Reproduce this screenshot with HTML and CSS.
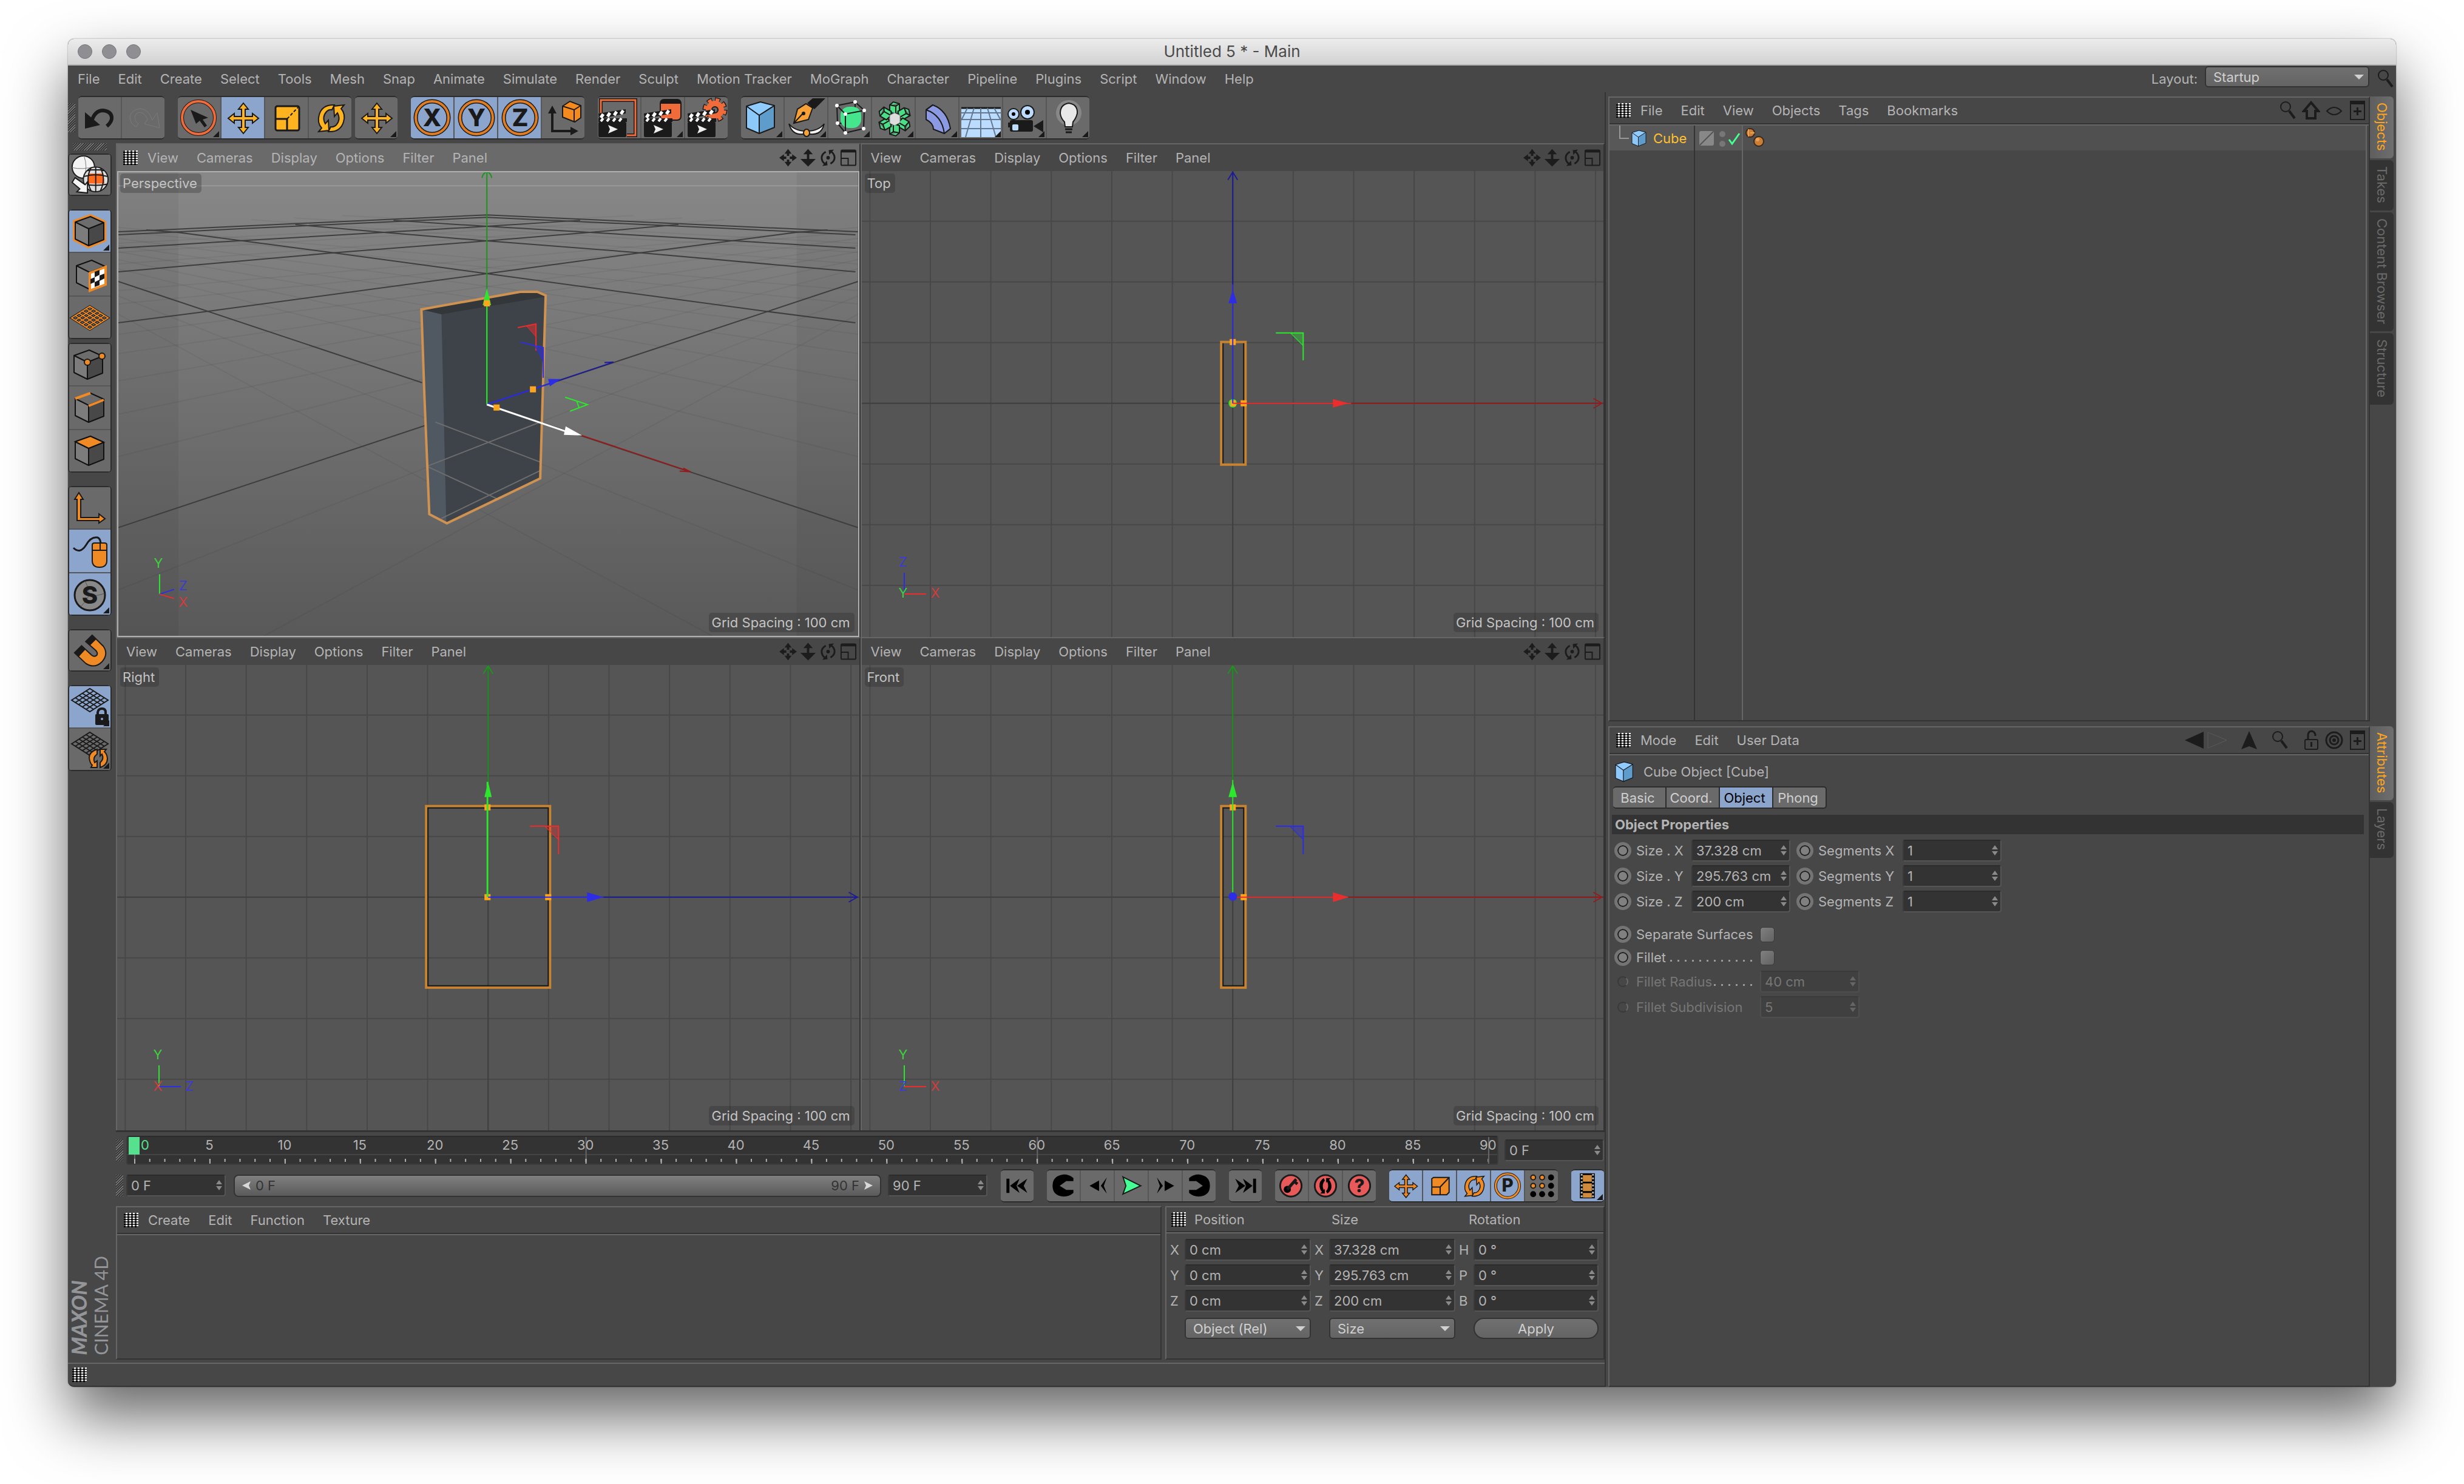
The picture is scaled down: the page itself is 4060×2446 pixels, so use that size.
FILE: index.html
```html
<!DOCTYPE html>
<html lang="en">
<head>
    <meta charset="UTF-8">
    <meta name="viewport" content="width=device-width, initial-scale=1.0">
    <title>Untitled 5 * - Main</title>
    <link rel="stylesheet" href="styles.css">
</head>
<body>

    <!-- Shared icons -->
    <svg class="sprite" aria-hidden="true">
        <symbol id="move" viewBox="0 0 70 68">
            <path d="M36 10l8 10h-5v12h12v-5l10 8-10 8v-5h-12v12h5l-8 10-8-10h5v-12h-12v5l-10-8 10-8v5h12v-12h-5z" fill="currentColor" stroke="#1a1a1a" stroke-width="2"/>
        </symbol>
        <symbol id="scale" viewBox="0 0 70 68">
            <rect x="17" y="15" width="39" height="40" rx="3" fill="currentColor" stroke="#1a1a1a" stroke-width="3"/>
            <path d="M17 36h19v19" fill="none" stroke="#1a1a1a" stroke-width="3"/>
            <path d="M36 36L54 17" stroke="#1a1a1a" stroke-width="2" stroke-dasharray="5 3"/>
        </symbol>
        <symbol id="rotate" viewBox="0 0 70 68">
            <g fill="currentColor" stroke="#1a1a1a" stroke-width="2">
                <path id="rot-half" d="M42 13Q22 12 17 29Q13 42 21 51L16 57L33 55L32 38L27 44Q21 33 29 24Q33 20 38 21Z"/>
                <use href="#rot-half" transform="rotate(180 37 35)"/>
            </g>
        </symbol>
        <symbol id="cube-blue" viewBox="0 0 70 68">
            <path d="M9 15L32 8L55 14L30 30Z" fill="#90ccff"/>
            <path d="M9 15L30 30V60L9 51Z" fill="#8cc8fa"/>
            <path d="M30 30L55 14V50L30 60Z" fill="#5e9ccc"/>
            <path d="M9 15L32 8L55 14V50L30 60L9 51ZM9 15L30 30L55 14M30 30V60" fill="none" stroke="#1a1a1a" stroke-width="2" stroke-linejoin="round"/>
        </symbol>
        <symbol id="cube-grey" viewBox="0 0 68 68">
            <path d="M10 19L35 10L57 20L32 30Z" fill="#6c6c6c"/>
            <path d="M10 19L32 30V58L10 47Z" fill="#7c7c7c"/>
            <path d="M32 30L57 20V48L32 58Z" fill="#484848"/>
            <path d="M10 19L35 10L57 20V48L32 58L10 47ZM10 19L32 30L57 20M32 30V58" fill="none" stroke="#111" stroke-width="2" stroke-linejoin="round"/>
        </symbol>
        <symbol id="clapper" viewBox="0 0 70 68">
            <path d="M1 27L46 20V27L2 36Z" fill="#1a1a1a"/>
            <path d="M5 34l4-6M16 32l4-6M27 30l4-6M38 28l4-6" stroke="#fff" stroke-width="5"/>
            <path d="M1 35h47v6h-47z" fill="#1a1a1a"/>
            <path d="M5 40l4-5M15 40l4-5M25 40l4-5M35 40l4-5" stroke="#fff" stroke-width="4"/>
            <rect x="1" y="41" width="46" height="25" rx="2" fill="#1a1a1a"/>
            <path d="M17 46L33 53L17 60L20 53Z" fill="#eee"/>
        </symbol>
        <symbol id="grid-plane" viewBox="0 0 68 68">
            <path d="M4 35L34 16L64 35L34 54ZM10 31L40 50M16 27L46 46M22 24L52 42M28 20L58 39M10 39L40 20M16 42L46 24M22 46L52 27M28 50L58 31" fill="none"/>
        </symbol>
        <symbol id="nav-pan" viewBox="0 0 30 30">
            <path d="M15 0l6 8h-4v4h-4v-4h-4zM15 30l6-8h-4v-4h-4v4h-4zM0 15l8-6v4h4v4h-4v4zM30 15l-8-6v4h-4v4h4v4z" fill="#1c1c1c"/>
        </symbol>
        <symbol id="nav-zoom" viewBox="0 0 30 30">
            <path d="M15 0l8 9h-6v8h11l-13 13-13-13h11v-8h-6z" fill="#1c1c1c"/>
        </symbol>
        <symbol id="nav-orbit" viewBox="0 0 30 30">
            <g fill="none" stroke="#1c1c1c" stroke-width="3">
                <path d="M11 5Q4 9 4 15Q4 21 9 25"/>
                <path d="M19 25Q26 21 26 15Q26 9 21 5"/>
            </g>
            <path d="M5 29l9-1-1-8zM25 1l-9 1 1 8z" fill="#1c1c1c"/>
            <circle cx="15" cy="15" r="3" fill="#1c1c1c"/>
        </symbol>
        <symbol id="nav-max" viewBox="0 0 30 30">
            <rect x="3" y="2" width="25" height="26" rx="2" fill="none" stroke="#1c1c1c" stroke-width="2"/>
            <path d="M3 2h25v4h-25z" fill="#1c1c1c"/>
            <path d="M3 16h12v12" fill="none" stroke="#1c1c1c" stroke-width="2"/>
        </symbol>
        <symbol id="search" viewBox="0 0 30 34">
            <circle cx="11" cy="11" r="8" fill="none" stroke="#1c1c1c" stroke-width="2"/>
            <path d="M17 18L26 30" stroke="#1c1c1c" stroke-width="4"/>
        </symbol>
        <symbol id="plus-box" viewBox="0 0 30 34">
            <path d="M4 2h23v30h-23z" fill="none" stroke="#1c1c1c" stroke-width="2"/>
            <path d="M4 2h23v5h-23zM14 12h3v5h5v3h-5v5h-3v-5h-5v-3h5z" fill="#1c1c1c"/>
        </symbol>
    </svg>

    <main class="window">
        <header class="titlebar">
            <div class="lights"><i></i><i></i><i></i></div>
            <h1>Untitled 5 * - Main</h1>
        </header>

        <div class="menubar">
            <nav class="menu">
                <button>File</button><button>Edit</button><button>Create</button><button>Select</button><button>Tools</button><button>Mesh</button><button>Snap</button><button>Animate</button><button>Simulate</button><button>Render</button><button>Sculpt</button><button>Motion Tracker</button><button>MoGraph</button><button>Character</button><button>Pipeline</button><button>Plugins</button><button>Script</button><button>Window</button><button>Help</button>
            </nav>
            <label class="layout-label" for="layout">Layout:</label>
            <span class="select layout-select"><select id="layout"><option>Startup</option></select></span>
            <svg class="small-icon"><use href="#search"/></svg>
        </div>

        <div class="body">
            <div class="left">

                <!-- Tool bar -->
                <div class="toolbar">
                    <span class="grip-v"></span>
                    <div class="group">
                        <button aria-label="Undo"><svg viewBox="0 0 70 68"><path d="M22 40Q27 22 41 22Q56 24 55 36Q54 42 47 48" fill="none" stroke="#1a1a1a" stroke-width="6"/><path d="M11 25L11 52L36 46Z" fill="#1a1a1a"/></svg></button>
                        <button aria-label="Redo"><svg viewBox="0 0 70 68"><path d="M50 38Q44 20 30 19Q14 21 13 34Q14 44 23 49L27 44Q19 38 22 30Q26 23 33 26Q39 29 42 37L37 44L62 51L58 26Z" fill="none" stroke="#7a7a7a" stroke-width="1"/></svg></button>
                    </div>
                    <div class="group">
                        <button aria-label="Live selection" class="more"><svg viewBox="0 0 70 68"><circle cx="34" cy="34" r="27" fill="none" stroke="#1a1a1a" stroke-width="6"/><circle cx="34" cy="34" r="27" fill="none" stroke="#ef6b3a" stroke-width="4"/><path d="M21 21L50 34L41 37L48 47L44 50L36 39L30 44Z" fill="#1a1a1a"/></svg></button>
                        <button aria-label="Move" class="on yellow"><svg><use href="#move"/></svg></button>
                        <button aria-label="Scale" class="yellow"><svg><use href="#scale"/></svg></button>
                        <button aria-label="Rotate" class="yellow"><svg><use href="#rotate"/></svg></button>
                    </div>
                    <div class="group near">
                        <button aria-label="Recent tool" class="yellow more"><svg><use href="#move"/></svg></button>
                    </div>
                    <div class="group">
                        <button aria-label="X axis" class="on"><svg viewBox="0 0 70 68"><circle cx="35" cy="34" r="27" class="ring-edge"/><circle cx="35" cy="34" r="27" class="ring"/><text x="35" y="48" class="axis-letter">X</text></svg></button>
                        <button aria-label="Y axis" class="on"><svg viewBox="0 0 70 68"><circle cx="36" cy="34" r="27" class="ring-edge"/><circle cx="36" cy="34" r="27" class="ring"/><text x="36" y="48" class="axis-letter">Y</text></svg></button>
                        <button aria-label="Z axis" class="on"><svg viewBox="0 0 70 68"><circle cx="36" cy="34" r="27" class="ring-edge"/><circle cx="36" cy="34" r="27" class="ring"/><text x="36" y="48" class="axis-letter">Z</text></svg></button>
                        <button aria-label="Coordinate system"><svg viewBox="0 0 70 68"><path d="M17 20V56H50" fill="none" stroke="#1a1a1a" stroke-width="4"/><path d="M17 14L24 27H10ZM60 56L47 49V63Z" fill="#1a1a1a"/><path d="M34 15L46 7L64 14V34L54 41L34 33Z" fill="#f58a1f" stroke="#1a1a1a" stroke-width="2"/><path d="M34 15L53 21L64 14M53 21V41" fill="none" stroke="#1a1a1a" stroke-width="2"/></svg></button>
                    </div>
                    <div class="group">
                        <button aria-label="Render view"><svg viewBox="0 0 70 68"><path d="M5 26V5H62V63H48" fill="none" stroke="#1a1a1a" stroke-width="6"/><path d="M5 26V5H62V63H48" fill="none" stroke="#ef6b3a" stroke-width="3"/><use href="#clapper"/></svg></button>
                        <button aria-label="Render to picture viewer" class="more"><svg viewBox="0 0 70 68"><rect x="31" y="4" width="34" height="34" rx="6" fill="#ef6b3a" stroke="#1a1a1a" stroke-width="2"/><path d="M31 11V10Q31 4 37 4H59Q65 4 65 10V11Z" fill="#1a1a1a"/><use href="#clapper" x="3"/></svg></button>
                        <button aria-label="Render settings"><svg viewBox="0 0 70 68"><circle cx="49" cy="21" r="16" fill="none" stroke="#1a1a1a" stroke-width="9" stroke-dasharray="8 4.5"/><circle cx="49" cy="21" r="16" fill="none" stroke="#ef6b3a" stroke-width="6" stroke-dasharray="6 6.5" stroke-dashoffset="-1"/><circle cx="49" cy="21" r="10" fill="none" stroke="#ef6b3a" stroke-width="10"/><circle cx="49" cy="21" r="5" fill="none" stroke="#1a1a1a" stroke-width="2"/><use href="#clapper" x="3"/></svg></button>
                    </div>
                    <div class="group">
                        <button aria-label="Cube" class="more"><svg><use href="#cube-blue"/></svg></button>
                        <button aria-label="Pen" class="more"><svg viewBox="0 0 70 68"><path d="M15 43L21 20L35 11L46 18L39 37Z" fill="#f7a136" stroke="#1a1a1a" stroke-width="2"/><path d="M15 43L30 27" stroke="#1a1a1a" stroke-width="2"/><circle cx="31" cy="27" r="3" fill="#1a1a1a"/><path d="M37 10L46 2H67L49 20Z" fill="#1a1a1a"/><path d="M7 44Q13 66 36 60Q60 66 65 44Q56 56 36 56Q16 56 7 44Z" fill="#f4f4f4" stroke="#1a1a1a" stroke-width="2"/><ellipse cx="36" cy="59" rx="5" ry="6" fill="#f7a136" stroke="#1a1a1a" stroke-width="2"/></svg></button>
                        <button aria-label="Subdivision surface" class="more"><svg viewBox="0 0 70 68"><path d="M14 14L44 8V44L15 43Z" fill="none" stroke="#1a1a1a" stroke-width="2"/><rect x="20" y="16" width="34" height="35" rx="14" fill="#44e58c"/><path d="M28 28L59 22L58 52L28 59ZM14 14L28 28M44 8L59 22M15 43L28 59" fill="none" stroke="#1a1a1a" stroke-width="2"/><g fill="#fff"><circle cx="14" cy="14" r="3"/><circle cx="44" cy="8" r="3"/><circle cx="59" cy="22" r="3"/><circle cx="28" cy="28" r="3"/><circle cx="15" cy="43" r="3"/><circle cx="58" cy="52" r="3"/><circle cx="28" cy="59" r="3"/></g></svg></button>
                        <button aria-label="Array" class="more"><svg viewBox="0 0 70 68"><g fill="#4ade86" stroke="#1a1a1a" stroke-width="2"><path id="petal" d="M29 13L35 8L45 11V25L39 28L29 25ZM29 13L39 15L45 11M39 15V28"/><use href="#petal" transform="rotate(60 37 36)"/><use href="#petal" transform="rotate(120 37 36)"/><use href="#petal" transform="rotate(180 37 36)"/><use href="#petal" transform="rotate(240 37 36)"/><use href="#petal" transform="rotate(300 37 36)"/></g><path d="M29 30L37 26L46 30V42L37 47L29 43Z" fill="#ddd" stroke="#777" stroke-width="1"/></svg></button>
                        <button aria-label="Bend" class="more"><svg viewBox="0 0 70 68"><path d="M28 13Q52 22 57 52L47 60L29 53Q29 43 17 37V21Z" fill="#8b9ae2" stroke="#1a1a1a" stroke-width="2"/><path d="M17 21Q43 30 47 60M17 21L28 13" fill="none" stroke="#1a1a1a" stroke-width="2"/></svg></button>
                        <button aria-label="Floor" class="more"><svg viewBox="0 0 70 68"><rect x="3" y="18" width="65" height="48" fill="#bcdcff"/><path d="M3 18H68" stroke="#1a1a1a" stroke-width="3"/><path d="M3 26H68M3 37H68M3 52H68M35 18V66M24 18L10 66M46 18L60 66M13 18L3 38M57 18L68 38" stroke="#61788f" stroke-width="2"/></svg></button>
                        <button aria-label="Camera" class="more"><svg viewBox="0 0 70 68"><circle cx="17" cy="28" r="9" fill="#bcdcff" stroke="#1a1a1a" stroke-width="2"/><circle cx="40" cy="25" r="11" fill="#bcdcff" stroke="#1a1a1a" stroke-width="2"/><circle cx="17" cy="28" r="3"/><circle cx="40" cy="25" r="4"/><rect x="11" y="38" width="38" height="19" rx="3" fill="#1a1a1a"/><path d="M50 48L66 38V58ZM8 42h4v8h-4z" fill="#1a1a1a"/><rect x="15" y="45" width="10" height="10" rx="2" fill="#bcdcff"/></svg></button>
                        <button aria-label="Light" class="more"><svg viewBox="0 0 70 68"><circle cx="36" cy="26" r="21" fill="#fff" opacity=".2"/><path d="M36 10Q51 12 50 27Q48 35 43 41L42 49H30L29 41Q23 35 22 27Q22 12 36 10Z" fill="#e8e8e8" stroke="#1a1a1a" stroke-width="2"/><path d="M30 53H42M31 58H41" stroke="#1a1a1a" stroke-width="3"/></svg></button>
                    </div>
                </div>

                <div class="work">
                    <!-- Mode palette -->
                    <aside class="palette">
                        <span class="grip-h"></span>
                        <div class="group vertical near">
                            <button aria-label="Make editable"><svg viewBox="0 0 68 68"><circle cx="23" cy="21" r="19" fill="#f4f4f4" stroke="#1a1a1a" stroke-width="2"/><path d="M24 2Q31 20 24 40M4 22Q22 26 42 20" fill="none" stroke="#777" stroke-width="1"/><circle cx="44" cy="42" r="21" fill="#ddd" stroke="#1a1a1a" stroke-width="2"/><path d="M32 32H57L59 49H30Z" fill="#ff6a1c"/><path d="M44 21V63M36 22Q26 42 36 61M52 22Q62 42 52 61M24 37Q44 31 64 37M24 50Q44 54 64 50M30 27Q44 24 58 27" fill="none" stroke="#1a1a1a" stroke-width="2"/><path d="M9 39L26 51L30 46V65L12 63L17 58L4 47Z" fill="#f4f4f4" stroke="#1a1a1a" stroke-width="2"/></svg></button>
                        </div>
                        <div class="group vertical">
                            <button aria-label="Model" class="on more"><svg viewBox="0 0 68 68"><path d="M10 19L35 10L57 20V48L32 58L10 47Z" fill="none" stroke="#f08a24" stroke-width="8"/><use href="#cube-grey"/></svg></button>
                            <button aria-label="Texture"><svg viewBox="0 0 68 68"><use href="#cube-grey" x="2" y="1"/><path d="M34 32L60 22V51L34 61Z" fill="#fff" stroke="#f08a24" stroke-width="4"/><path d="M35 42l7-3v8l-7 3zM42 30l8-3v8l-8 4zM50 36l8-3v8l-8 4zM42 47l8-4v9l-8 3z" fill="#1a1a1a"/></svg></button>
                            <button aria-label="Workplane"><svg viewBox="0 0 68 68"><use href="#grid-plane" stroke="#1a1a1a" stroke-width="4"/><use href="#grid-plane" stroke="#f08a24" stroke-width="2"/></svg></button>
                        </div>
                        <div class="group vertical near">
                            <button aria-label="Points"><svg viewBox="0 0 68 68"><use href="#cube-grey" x="-2"/><g fill="#f08a24" stroke="#1a1a1a" stroke-width="2"><circle cx="30" cy="30" r="5"/><circle cx="54" cy="20" r="5"/></g></svg></button>
                            <button aria-label="Edges"><svg viewBox="0 0 68 68"><use href="#cube-grey"/><path d="M10 19L35 10M32 31L57 21" stroke="#f08a24" stroke-width="4"/></svg></button>
                            <button aria-label="Polygons"><svg viewBox="0 0 68 68"><use href="#cube-grey"/><path d="M10 19L35 10L57 20L32 30Z" fill="#f08a24" stroke="#111" stroke-width="2"/></svg></button>
                        </div>
                        <div class="group vertical">
                            <button aria-label="Enable axis"><svg viewBox="0 0 68 68"><path d="M16 9L23 20H19V50H49V44L59 52L49 59V55H13V20H9Z" fill="#f08a24" stroke="#1a1a1a" stroke-width="2"/></svg></button>
                            <button aria-label="Tweak" class="on"><svg viewBox="0 0 68 68"><path d="M7 29Q18 40 28 24Q36 10 47 12Q52 14 52 24" fill="none" stroke="#1a1a1a" stroke-width="3"/><path d="M38 24Q38 21 42 21H58Q62 21 62 24V50Q62 61 50 61Q38 61 38 50Z" fill="#f08a24" stroke="#1a1a1a" stroke-width="2"/><path d="M38 33H62M51 21V33" stroke="#1a1a1a" stroke-width="2"/></svg></button>
                            <button aria-label="Viewport solo" class="on more"><svg viewBox="0 0 68 68"><circle cx="34" cy="36" r="25" fill="#888" stroke="#1a1a1a" stroke-width="3"/><path d="M33 36Q32 22 26 13M33 36Q46 38 58 33M33 36Q28 46 19 55" fill="none" stroke="#555" stroke-width="1"/><text x="34" y="50" class="axis-letter">S</text></svg></button>
                        </div>
                        <div class="group vertical">
                            <button aria-label="Snap" class="more"><svg viewBox="0 0 68 68"><path d="M8 38L20 26L37 42Q42 46 46 42Q48 38 44 34L27 19L38 8L57 27Q66 40 55 53Q42 66 27 56Z" fill="#f08a24" stroke="#1a1a1a" stroke-width="2"/><path d="M8 38L20 26L27 32L15 45ZM27 19L38 8L45 15L34 26Z" fill="#1a1a1a"/></svg></button>
                        </div>
                        <div class="group vertical">
                            <button aria-label="Lock workplane" class="on more"><svg viewBox="0 0 68 68"><use href="#grid-plane" y="-12" stroke="#1a1a1a" stroke-width="2"/><path d="M47 48V43Q48 37 54 37Q60 37 60 43V48" fill="none" stroke="#1a1a1a" stroke-width="4"/><rect x="43" y="46" width="22" height="18" rx="2" fill="#1a1a1a"/><circle cx="54" cy="54" r="2" fill="#8ba5cd"/></svg></button>
                            <button aria-label="Planar workplane" class="more"><svg viewBox="0 0 68 68"><use href="#grid-plane" y="-10" stroke="#1a1a1a" stroke-width="2"/><g fill="#f08a24" stroke="#1a1a1a" stroke-width="2"><path d="M46 34Q33 38 33 48Q34 57 38 60L36 64H46V53L42 56Q38 48 46 42Z"/><path d="M51 64Q63 60 63 49Q62 41 58 38L61 34H51V45L54 42Q58 50 51 56Z"/></g></svg></button>
                        </div>
                        <div class="brand">
                            <strong>MAXON</strong>
                            <span>CINEMA 4D</span>
                        </div>
                    </aside>

                    <div class="content">
                        <section class="views">
                            <article class="view active">
                                <header>
                                    <span class="grip"></span>
                                    <nav class="menu"><button>View</button><button>Cameras</button><button>Display</button><button>Options</button><button>Filter</button><button>Panel</button></nav>
                                    <span class="nav-icons"><svg><use href="#nav-pan"/></svg><svg><use href="#nav-zoom"/></svg><svg><use href="#nav-orbit"/></svg><svg><use href="#nav-max"/></svg></span>
                                </header>
                                <div class="canvas">
                                    <svg viewBox="0 0 1220 766" preserveAspectRatio="xMidYMid slice">
                                        <defs><linearGradient id="sky" x1="0" y1="0" x2="0" y2="1"><stop offset="0" stop-color="#888"/><stop offset="1" stop-color="#595959"/></linearGradient></defs>
                                        <rect width="1220" height="766" fill="url(#sky)"/>
                                        <path d="M0 0H99V766H0ZM1119 0H1220V766H1119Z" fill="#000" opacity=".05"/>
                                        <path d="M0 23H1220" stroke="#999" stroke-width="2"/>
                                        <g stroke="#000" stroke-opacity=".05" stroke-width="2">
                                            <path id="faint" d="M0 118L850 72M0 133L930 76M0 152L1000 79M0 196L1220 92M0 218L1220 98M0 268L1220 110M0 300L1220 122M0 345L1220 132M0 400L1220 145M0 470L1220 160M0 690L1220 205M240 766L1220 235"/>
                                            <use href="#faint" transform="matrix(-1 0 0 1 1220 0)"/>
                                        </g>
                                        <g fill="none" stroke="#3e3e3e" stroke-width="2">
                                            <path d="M0 181L501 348M608 384L1220 587M0 587L523 413M608 384L1220 181"/>
                                            <path id="far" d="M0 249L149 230L608 168L859 134L1011 114L1118 100L1170 96M0 165L351 134L608 114L790 99L924 87M0 126L197 114L438 100L608 90L762 80M0 104L200 94L608 75"/>
                                            <use href="#far" transform="matrix(-1 0 0 1 1216 0)"/>
                                            <path d="M0 99L608 71L1220 99"/>
                                        </g>
                                        <!-- Selected cube -->
                                        <path d="M500 227L663 198H691L705 204L703 270L696 506L542 580L513 565L505 371Z" fill="#3e434a"/>
                                        <path d="M500 227L533 235L541 580L513 565L505 371Z" fill="#505962"/>
                                        <path d="M500 227L663 198H691L705 206L533 235Z" fill="#33373a"/>
                                        <path d="M523 413L696 479M509 486L696 413M509 486L628 541M533 572L696 493" fill="none" stroke="#6d6d6d" stroke-width="2"/>
                                        <path d="M500 227L663 198H691L705 204L703 270L696 506L542 580L513 565L505 371Z" fill="none" stroke="#cf9250" stroke-width="4"/>
                                        <g fill="none" stroke-width="2">
                                            <path d="M608 384V0M600 10Q602 1 608 0Q614 1 616 10" stroke="#1c951c"/>
                                            <path d="M608 384V200" stroke="#2de62d"/>
                                            <path d="M608 384L817 314M802 315L817 314" stroke="#1c1c99"/>
                                            <path d="M608 384L710 350M663 281L701 290V340" stroke="#2d2de6"/>
                                            <path d="M764 435L944 495M926 494L944 495L932 489" stroke="#951c1c"/>
                                            <path d="M608 384L740 429" stroke="#fff" stroke-width="3"/>
                                            <path d="M659 257L689 251V295" stroke="#ea2d2d"/>
                                            <path d="M737 372L774 384L745 395M756 378L760 389" stroke="#2de62d"/>
                                        </g>
                                        <path d="M608 192L615 220H601Z" fill="#2de62d"/>
                                        <path d="M709 342H730L712 354Z" fill="#2d2de6"/>
                                        <path d="M738 420L765 435L735 434Z" fill="#fff"/>
                                        <path d="M673 254L689 251V272Z" fill="#ea2d2d" fill-opacity=".5" stroke="#ea2d2d"/>
                                        <path d="M687 287L701 290V313Z" fill="#2d2de6" fill-opacity=".5" stroke="#2d2de6"/>
                                        <path d="M603 212h10v10h-10zM679 354h10v10h-10zM619 384h10v10h-10z" fill="#ffa51c"/>
                                        <g fill="none" stroke-width="2"><path d="M68 664V697" stroke="#2de62d"/><path d="M68 697L92 689" stroke="#2d2de6"/><path d="M68 697L92 704" stroke="#ea2d2d"/></g>
                                        <g class="axes"><text x="66" y="654" class="y">Y</text><text x="107" y="691" class="z">Z</text><text x="107" y="718" class="x">X</text></g>
                                    </svg>
                                    <span class="view-name">Perspective</span>
                                    <span class="spacing">Grid Spacing : 100 cm</span>
                                </div>
                            </article>

                            <article class="view">
                                <header>
                                    <nav class="menu"><button>View</button><button>Cameras</button><button>Display</button><button>Options</button><button>Filter</button><button>Panel</button></nav>
                                    <span class="nav-icons"><svg><use href="#nav-pan"/></svg><svg><use href="#nav-zoom"/></svg><svg><use href="#nav-orbit"/></svg><svg><use href="#nav-max"/></svg></span>
                                </header>
                                <div class="canvas">
                                    <svg viewBox="0 0 1222 768" preserveAspectRatio="xMidYMid slice">
                                        <defs><pattern id="grid" x="610" y="382" width="99.6" height="100" patternUnits="userSpaceOnUse"><path d="M1 0V100M0 1H100" stroke="#474747" stroke-width="2"/></pattern></defs>
                                        <rect width="1222" height="768" fill="url(#grid)"/>
                                        <path d="M611 0V768M0 383H1222" stroke="#404040" stroke-width="2"/>
                                        <rect x="592" y="282" width="40" height="202" fill="none" stroke="#c68432" stroke-width="4"/>
                                        <path d="M595 284V482M629 284V482" stroke="#1a1a1a" stroke-width="2"/>
                                        <g fill="none" stroke-width="2">
                                            <path d="M611 187V2M603 15L611 2L619 15" stroke="#1c1c99"/>
                                            <path d="M806 383H1220M1205 375L1219 383L1205 391" stroke="#951c1c"/>
                                            <path d="M682 267H727V312" stroke="#2de62d"/>
                                        </g>
                                        <path d="M706 267H727V288Z" fill="#2de62d" fill-opacity=".35" stroke="#2de62d"/>
                                        <path d="M611 196L618 218H604Z" fill="#2d2de6"/>
                                        <circle cx="611" cy="383" r="7" fill="#2de62d"/>
                                        <path d="M606 277h10v10h-10zM607 378h9v10h-9zM624 378h10v10h-10z" fill="#ffa51c"/>
                                        <path d="M611 383H806" stroke="#ea2d2d" stroke-width="2"/><path d="M611 383V187" stroke="#2d2de6" stroke-width="2"/>
                                        <path d="M776 376L802 383L776 390Z" fill="#ea2d2d"/>
                                        <path d="M70 662V697" stroke="#2d2de6" stroke-width="2"/><path d="M70 697H106" stroke="#ea2d2d" stroke-width="2"/>
                                        <g class="axes"><text x="68" y="652" class="z">Z</text><text x="68" y="703" class="y">Y</text><text x="121" y="703" class="x">X</text></g>
                                    </svg>
                                    <span class="view-name">Top</span>
                                    <span class="spacing">Grid Spacing : 100 cm</span>
                                </div>
                            </article>

                            <article class="view">
                                <header>
                                    <nav class="menu"><button>View</button><button>Cameras</button><button>Display</button><button>Options</button><button>Filter</button><button>Panel</button></nav>
                                    <span class="nav-icons"><svg><use href="#nav-pan"/></svg><svg><use href="#nav-zoom"/></svg><svg><use href="#nav-orbit"/></svg><svg><use href="#nav-max"/></svg></span>
                                </header>
                                <div class="canvas">
                                    <svg viewBox="0 0 1222 768" preserveAspectRatio="xMidYMid slice">
                                        <rect width="1222" height="768" fill="url(#grid)"/>
                                        <path d="M611 0V768M0 383H1222" stroke="#404040" stroke-width="2"/>
                                        <rect x="509" y="233" width="204" height="299" fill="none" stroke="#c68432" stroke-width="4"/>
                                        <rect x="512" y="236" width="198" height="293" fill="none" stroke="#1a1a1a" stroke-width="2"/>
                                        <g fill="none" stroke-width="2">
                                            <path d="M611 200V2M603 15L611 2L619 15" stroke="#1c951c"/>
                                            <path d="M801 383H1220M1205 375L1219 383L1205 391" stroke="#1c1c99"/>
                                            <path d="M680 266H727V312" stroke="#ea2d2d"/>
                                        </g>
                                        <path d="M704 266H727V288Z" fill="#ea2d2d" fill-opacity=".35" stroke="#ea2d2d"/>
                                        <path d="M605 230h10v10h-10zM605 378h10v10h-10zM705 378h10v10h-10z" fill="#ffa51c"/>
                                        <path d="M610 383V193" stroke="#2de62d" stroke-width="3"/><path d="M611 383H801" stroke="#2d2de6" stroke-width="2"/>
                                        <path d="M611 193L617 218H605Z" fill="#2de62d"/>
                                        <path d="M774 375L801 383L774 391Z" fill="#2d2de6"/>
                                        <path d="M69 660V695" stroke="#2de62d" stroke-width="2"/><path d="M69 695H105" stroke="#2d2de6" stroke-width="2"/>
                                        <g class="axes"><text x="67" y="650" class="y">Y</text><text x="67" y="702" class="x">X</text><text x="119" y="702" class="z">Z</text></g>
                                    </svg>
                                    <span class="view-name">Right</span>
                                    <span class="spacing">Grid Spacing : 100 cm</span>
                                </div>
                            </article>

                            <article class="view">
                                <header>
                                    <nav class="menu"><button>View</button><button>Cameras</button><button>Display</button><button>Options</button><button>Filter</button><button>Panel</button></nav>
                                    <span class="nav-icons"><svg><use href="#nav-pan"/></svg><svg><use href="#nav-zoom"/></svg><svg><use href="#nav-orbit"/></svg><svg><use href="#nav-max"/></svg></span>
                                </header>
                                <div class="canvas">
                                    <svg viewBox="0 0 1222 768" preserveAspectRatio="xMidYMid slice">
                                        <rect width="1222" height="768" fill="url(#grid)"/>
                                        <path d="M611 0V768M0 383H1222" stroke="#404040" stroke-width="2"/>
                                        <rect x="592" y="233" width="40" height="299" fill="none" stroke="#c68432" stroke-width="4"/>
                                        <rect x="595" y="236" width="34" height="293" fill="none" stroke="#1a1a1a" stroke-width="2"/>
                                        <g fill="none" stroke-width="2">
                                            <path d="M611 200V2M603 15L611 2L619 15" stroke="#1c951c"/>
                                            <path d="M801 383H1220M1205 375L1219 383L1205 391" stroke="#951c1c"/>
                                            <path d="M682 266H727V312" stroke="#2d2de6"/>
                                        </g>
                                        <path d="M705 266H727V288Z" fill="#2d2de6" fill-opacity=".35" stroke="#2d2de6"/>
                                        <path d="M606 230h10v10h-10zM624 378h10v10h-10z" fill="#ffa51c"/>
                                        <path d="M611 383V190" stroke="#2de62d" stroke-width="2"/><path d="M611 383H801" stroke="#ea2d2d" stroke-width="2"/>
                                        <circle cx="611" cy="382" r="7" fill="#2d2de6"/>
                                        <path d="M611 193L618 218H604Z" fill="#2de62d"/>
                                        <path d="M776 375L802 383L776 391Z" fill="#ea2d2d"/>
                                        <path d="M70 660V695" stroke="#2de62d" stroke-width="2"/><path d="M70 695H106" stroke="#ea2d2d" stroke-width="2"/>
                                        <g class="axes"><text x="68" y="650" class="y">Y</text><text x="68" y="702" class="z">Z</text><text x="121" y="702" class="x">X</text></g>
                                    </svg>
                                    <span class="view-name">Front</span>
                                    <span class="spacing">Grid Spacing : 100 cm</span>
                                </div>
                            </article>
                        </section>

                        <!-- Timeline -->
                        <div class="timeline">
                            <span class="grip-v"></span>
                            <div class="ruler">
                                <div class="marker"></div>
                                <div class="frames">
                                    <span class="now">0</span><span>5</span><span>10</span><span>15</span><span>20</span><span>25</span><span>30</span><span>35</span><span>40</span><span>45</span><span>50</span><span>55</span><span>60</span><span>65</span><span>70</span><span>75</span><span>80</span><span>85</span><span>90</span>
                                </div>
                            </div>
                            <span class="field frame-field"><input type="text" aria-label="Current frame" value="0 F"></span>
                        </div>

                        <div class="playback">
                            <span class="grip-v"></span>
                            <span class="field frame-field"><input type="text" aria-label="Start frame" value="0 F"></span>
                            <div class="range">
                                <svg viewBox="0 0 14 14"><path d="M14 0L0 7L14 14L11 7Z"/></svg><span>0 F</span>
                                <span class="end">90 F</span><svg viewBox="0 0 14 14"><path d="M0 0L14 7L0 14L3 7Z"/></svg>
                            </div>
                            <span class="field frame-field"><input type="text" aria-label="End frame" value="90 F"></span>
                            <div class="group small">
                                <button aria-label="Go to start"><svg viewBox="0 0 54 52"><path d="M9 14h5v24h-5zM31 14L15 26 31 38 26 26zM44 14L27 26 44 38 38 26z"/></svg></button>
                            </div>
                            <div class="group small">
                                <button aria-label="Previous key"><svg viewBox="0 0 54 52"><path d="M44 13Q37 7 28 7Q9 9 9 26Q9 43 28 44Q37 44 44 38V33H32L21 26L32 18H44Z"/></svg></button>
                                <button aria-label="Previous frame"><svg viewBox="0 0 54 52"><path d="M30 17V35L14 26ZM43 12L33 26L43 39L38 26Z"/></svg></button>
                                <button aria-label="Play"><svg viewBox="0 0 54 52"><path d="M13 11L43 26L13 40L18 26Z" fill="#44ff93" stroke="#1a1a1a" stroke-width="2"/></svg></button>
                                <button aria-label="Next frame"><svg viewBox="0 0 54 52"><path d="M26 17V35L42 26ZM13 12L23 26L13 39L18 26Z"/></svg></button>
                                <button aria-label="Next key"><svg viewBox="0 0 54 52"><path d="M10 13Q17 7 26 7Q45 9 45 26Q45 43 26 44Q17 44 10 38V33H22L33 26L22 18H10Z"/></svg></button>
                            </div>
                            <div class="group small">
                                <button aria-label="Go to end"><svg viewBox="0 0 54 52"><path d="M40 14h5v24h-5zM23 14L39 26 23 38 28 26zM10 14L27 26 10 38 16 26z"/></svg></button>
                            </div>
                            <div class="group small">
                                <button aria-label="Record"><svg viewBox="0 0 54 52"><circle cx="26" cy="26" r="18" class="red"/><circle cx="20" cy="32" r="6"/><path d="M20 32L35 15M32 19l5 4" stroke="#1a1a1a" stroke-width="5"/></svg></button>
                                <button aria-label="Autokey"><svg viewBox="0 0 54 52"><circle cx="27" cy="26" r="18" class="red"/><path d="M24 13Q16 18 17 27Q18 33 21 36L18 39H26V31L24 33Q20 24 26 17ZM30 39Q38 34 37 25Q36 19 33 16L36 13H28V21L30 19Q34 28 28 35Z"/></svg></button>
                                <button aria-label="Key selection"><svg viewBox="0 0 54 52"><circle cx="27" cy="26" r="18" class="red"/><text x="27" y="37" class="p-letter">?</text></svg></button>
                            </div>
                            <div class="group small orange">
                                <button aria-label="Position key" class="on"><svg><use href="#move"/></svg></button>
                                <button aria-label="Scale key" class="on"><svg viewBox="0 0 54 52"><path d="M14 14L17 12H43V37L39 41H14Z" fill="currentColor" stroke="#1a1a1a" stroke-width="2"/><path d="M14 28H28V41M28 28L43 12" fill="none" stroke="#1a1a1a" stroke-width="2"/></svg></button>
                                <button aria-label="Rotation key" class="on"><svg><use href="#rotate"/></svg></button>
                                <button aria-label="Parameter key" class="on"><svg viewBox="0 0 54 52"><circle cx="27" cy="26" r="20" fill="none" stroke="#1a1a1a" stroke-width="5"/><circle cx="27" cy="26" r="20" fill="none" stroke="#f08a24" stroke-width="3"/><text x="27" y="36" class="p-letter">P</text></svg></button>
                                <button aria-label="Point level animation"><svg viewBox="0 0 54 52"><g stroke="#1a1a1a" fill="#f08a24" stroke-width="2"><circle cx="13" cy="12" r="4"/><circle cx="28" cy="12" r="4"/><circle cx="13" cy="26" r="4"/><circle cx="28" cy="26" r="4"/></g><circle cx="43" cy="12" r="5"/><circle cx="43" cy="26" r="5"/><circle cx="13" cy="40" r="5"/><circle cx="28" cy="40" r="5"/><circle cx="43" cy="40" r="5"/></svg></button>
                            </div>
                            <div class="group small">
                                <button aria-label="Timeline layout" class="on more"><svg viewBox="0 0 54 52"><rect x="14" y="5" width="25" height="42"/><path d="M19 8h15v11h-15zM19 22h15v13h-15zM19 38h15v8h-15z" fill="#d08a3c"/><path d="M17 6V47M36 6V47" stroke="#bbb" stroke-width="3" stroke-dasharray="3 3"/></svg></button>
                            </div>
                        </div>

                        <div class="bottom">
                            <section class="panel materials">
                                <header><span class="grip"></span><nav class="menu"><button>Create</button><button>Edit</button><button>Function</button><button>Texture</button></nav></header>
                            </section>
                            <section class="panel coords">
                                <header><span class="grip"></span><b>Position</b><b>Size</b><b>Rotation</b></header>
                                <div class="coord-grid">
                                    <label>X<span class="field"><input type="text" value="0 cm"></span></label>
                                    <label>X<span class="field"><input type="text" value="37.328 cm"></span></label>
                                    <label>H<span class="field"><input type="text" value="0 °"></span></label>
                                    <label>Y<span class="field"><input type="text" value="0 cm"></span></label>
                                    <label>Y<span class="field"><input type="text" value="295.763 cm"></span></label>
                                    <label>P<span class="field"><input type="text" value="0 °"></span></label>
                                    <label>Z<span class="field"><input type="text" value="0 cm"></span></label>
                                    <label>Z<span class="field"><input type="text" value="200 cm"></span></label>
                                    <label>B<span class="field"><input type="text" value="0 °"></span></label>
                                    <span class="select"><select aria-label="Position mode"><option>Object (Rel)</option></select></span>
                                    <span class="select"><select aria-label="Size mode"><option>Size</option></select></span>
                                    <button class="apply">Apply</button>
                                </div>
                            </section>
                        </div>
                    </div>
                </div>

                <footer class="status"><span class="grip"></span></footer>
            </div>

            <div class="right">
                <!-- Object manager -->
                <div class="dock objects">
                    <section class="panel">
                        <header>
                            <span class="grip"></span>
                            <nav class="menu"><button>File</button><button>Edit</button><button>View</button><button>Objects</button><button>Tags</button><button>Bookmarks</button></nav>
                            <span class="nav-icons wide">
                                <svg><use href="#search"/></svg>
                                <svg viewBox="0 0 30 34"><path d="M15 4L27 18H22V30H8V18H3Z" fill="none" stroke="#1c1c1c" stroke-width="4"/></svg>
                                <svg viewBox="0 0 30 34"><path d="M3 18Q15 6 27 18Q15 30 3 18Z" fill="none" stroke="#1c1c1c" stroke-width="2"/></svg>
                                <svg><use href="#plus-box"/></svg>
                            </span>
                        </header>
                        <div class="tree">
                            <div class="col names"><div class="row"><i class="branch"></i><svg class="obj-icon"><use href="#cube-blue"/></svg><span>Cube</span></div></div>
                            <div class="col flags"><div class="row"><svg viewBox="0 0 78 40"><rect x="7" y="8" width="24" height="24" rx="3" fill="#888"/><path d="M8 31L30 9" stroke="#555" stroke-width="2"/><circle cx="45" cy="13" r="5" fill="#777"/><circle cx="45" cy="29" r="5" fill="#777"/><path d="M56 22L61 29L73 12" fill="none" stroke="#44ff93" stroke-width="3"/></svg></div></div>
                            <div class="col tags"><div class="row"><svg viewBox="0 0 78 40"><g fill="#cc7e34" stroke="#3a2a1a" stroke-width="2"><circle cx="12" cy="11" r="7"/><circle cx="26" cy="25" r="8"/></g><path d="M9 5v12M12 11h7" stroke="#e8a25c" stroke-width="2"/><circle cx="24" cy="22" r="3" fill="#e8a25c"/></svg></div></div>
                        </div>
                    </section>
                    <div class="tabs"><button class="current">Objects</button><button>Takes</button><button>Content Browser</button><button>Structure</button></div>
                </div>

                <!-- Attribute manager -->
                <div class="dock attributes">
                    <section class="panel">
                        <header>
                            <span class="grip"></span>
                            <nav class="menu"><button>Mode</button><button>Edit</button><button>User Data</button></nav>
                            <span class="nav-icons wide">
                                <svg class="nav-history" viewBox="0 0 72 34"><path d="M33 3V31L2 17Z" fill="#1c1c1c"/><path d="M40 4V30L71 17Z" fill="none" stroke="#5a5a5a" stroke-width="1"/></svg>
                                <svg class="spaced" viewBox="0 0 30 34"><path d="M15 2L28 32L15 27L2 32Z" fill="#1c1c1c"/></svg>
                                <svg class="spaced"><use href="#search"/></svg>
                                <svg viewBox="0 0 30 34"><rect x="5" y="16" width="21" height="16" rx="2" fill="none" stroke="#1c1c1c" stroke-width="2"/><path d="M10 16V8Q11 2 16 2Q22 3 22 10" fill="none" stroke="#1c1c1c" stroke-width="3"/><path d="M14 20h3v8h-3z" fill="#1c1c1c"/></svg>
                                <svg viewBox="0 0 30 34"><g fill="none" stroke="#1c1c1c" stroke-width="3"><circle cx="15" cy="17" r="13"/><circle cx="15" cy="17" r="7"/></g><circle cx="15" cy="17" r="3" fill="#1c1c1c"/></svg>
                                <svg><use href="#plus-box"/></svg>
                            </span>
                        </header>
                        <div class="props">
                            <h2><svg><use href="#cube-blue"/></svg>Cube Object [Cube]</h2>
                            <div class="segmented"><button>Basic</button><button>Coord.</button><button class="on">Object</button><button>Phong</button></div>
                            <h3>Object Properties</h3>
                            <div class="prop-grid">
                                <i class="key"></i><label for="sx">Size . X</label><span class="field"><input id="sx" type="text" value="37.328 cm"></span>
                                <i class="key"></i><label for="gx">Segments X</label><span class="field"><input id="gx" type="text" value="1"></span>
                                <i class="key"></i><label for="sy">Size . Y</label><span class="field"><input id="sy" type="text" value="295.763 cm"></span>
                                <i class="key"></i><label for="gy">Segments Y</label><span class="field"><input id="gy" type="text" value="1"></span>
                                <i class="key"></i><label for="sz">Size . Z</label><span class="field"><input id="sz" type="text" value="200 cm"></span>
                                <i class="key"></i><label for="gz">Segments Z</label><span class="field"><input id="gz" type="text" value="1"></span>
                            </div>
                            <div class="prop-list">
                                <i class="key"></i><label for="sep">Separate Surfaces</label><input id="sep" type="checkbox">
                                <i class="key"></i><label for="fil" class="dots">Fillet</label><input id="fil" type="checkbox">
                            </div>
                            <div class="prop-list disabled">
                                <i class="key"></i><label for="rad" class="dots">Fillet Radius</label><span class="field"><input id="rad" type="text" value="40 cm" disabled></span>
                                <i class="key"></i><label for="sub">Fillet Subdivision</label><span class="field"><input id="sub" type="text" value="5" disabled></span>
                            </div>
                        </div>
                    </section>
                    <div class="tabs"><button class="current">Attributes</button><button>Layers</button></div>
                </div>
            </div>
        </div>
    </main>

</body>
</html>
```
FILE: styles.css
```css
* {
    box-sizing: border-box;
}
body {
    margin: 0;
    padding: 64px 112px 160px;
    background: #fff;
    color: #b4b4b4;
    font-family: Inter, "Liberation Sans", sans-serif;
    font-size: 22px;
    line-height: 26px;
}
button, input, select {
    font: inherit;
    color: inherit;
    border: none;
    background: none;
    padding: 0;
    margin: 0;
}
svg {
    display: block;
    flex: none;
}
.sprite {
    position: absolute;
    width: 0;
    height: 0;
}

/* Window */
.window {
    display: flex;
    flex-direction: column;
    min-height: calc(100vh - 224px);
    background: #474747;
    border-radius: 10px;
    box-shadow: 0 0 2px rgba(0, 0, 0, 0.5), 0 50px 100px rgba(0, 0, 0, 0.6);
}
.titlebar {
    display: flex;
    align-items: center;
    height: 44px;
    padding: 0 16px;
    background: linear-gradient(#ececec, #d2d2d2);
    border-bottom: 2px solid #b4b4b4;
    border-radius: 10px 10px 0 0;
}
.titlebar h1 {
    flex: 1;
    margin: 0 104px 0 0;
    text-align: center;
    color: #4a4a4a;
    font-size: 26px;
    font-weight: 400;
}
.lights {
    display: flex;
    gap: 16px;
    width: 104px;
}
.lights i {
    width: 24px;
    height: 24px;
    border-radius: 50%;
    background: #8e8e93;
    border: 1px solid #77777c;
}
.menubar {
    display: flex;
    align-items: center;
    height: 44px;
    padding: 0 2px 0 16px;
}
.menu {
    display: flex;
    gap: 30px;
    white-space: nowrap;
}
.menubar .menu {
    flex: 1;
}
.layout-label {
    margin-right: 12px;
}
.layout-select {
    width: 271px;
    margin: 0 12px 7px 0;
}
.small-icon {
    width: 30px;
    height: 34px;
}
.body {
    flex: 1;
    display: flex;
}
.left {
    flex: 1;
    min-width: 0;
    display: flex;
    flex-direction: column;
    border-right: 2px solid #333;
}

/* Drag handles */
.grip {
    flex: none;
    width: 24px;
    height: 24px;
    background: conic-gradient(#fff 25%, #474747 0 50%, #000 0 75%, #474747 0) 0 0 / 6px 4px;
}
.grip-v, .grip-h {
    flex: none;
    background: repeating-linear-gradient(135deg, #7a7a7a 0 1px, #3a3a3a 1px 3px);
}
.grip-v {
    width: 12px;
    height: 48px;
}
.grip-h {
    width: 56px;
    height: 12px;
    margin-bottom: 5px;
}

/* Tool buttons */
.toolbar {
    display: flex;
    align-items: center;
    height: 84px;
}
.toolbar .grip-v {
    margin-right: 5px;
}
.group {
    display: flex;
    gap: 2px;
    flex: none;
    border: solid #2c2c2c;
    border-width: 2px 0;
    border-radius: 6px;
    overflow: hidden;
    background: #575757;
}
.toolbar .group + .group {
    margin-left: 22px;
}
.toolbar .group.near {
    margin-left: 6px;
}
.group button {
    position: relative;
    width: 70px;
    height: 68px;
    background: #6a6a6a;
}
.group button svg {
    width: 100%;
    height: 100%;
}
.group .on {
    background: #8ba5cd;
}
.group .more::after {
    content: "";
    position: absolute;
    right: 2px;
    bottom: 2px;
    border: 5px solid transparent;
    border-right-color: #1a1a1a;
    border-bottom-color: #1a1a1a;
}
.yellow {
    color: #ffb31f;
}
.orange {
    color: #f08a24;
}
.ring, .ring-edge {
    fill: none;
    stroke: #1a1a1a;
    stroke-width: 7px;
}
.ring {
    stroke: #e07c22;
    stroke-width: 4px;
}
.axis-letter, .p-letter {
    font: 800 40px Inter, sans-serif;
    text-anchor: middle;
    fill: #1a1a1a;
}
.p-letter {
    font-size: 30px;
}
.red {
    fill: #e85a5a;
    stroke: #1a1a1a;
    stroke-width: 3px;
}
.work {
    flex: 1;
    display: flex;
}
.palette {
    display: flex;
    flex-direction: column;
    align-items: center;
    width: 79px;
    padding-right: 7px;
}
.palette .group {
    flex-direction: column;
    margin-bottom: 22px;
    border-width: 0 2px;
}
.palette .group:has(+ .near) {
    margin-bottom: 6px;
}
.group.vertical button {
    width: 68px;
    height: 70px;
}
.group.vertical button:first-child {
    border-top: 2px solid #2c2c2c;
}
.group.vertical button:last-child {
    border-bottom: 2px solid #2c2c2c;
}
.brand {
    display: flex;
    flex-direction: column;
    margin-top: auto;
    margin-bottom: 12px;
    writing-mode: vertical-rl;
    transform: rotate(180deg);
    color: #939599;
    font-family: Lato, sans-serif;
    font-size: 30px;
    line-height: 36px;
}
.brand strong {
    font-size: 34px;
    font-weight: 900;
    font-style: italic;
}
.brand span {
    font-weight: 400;
}
.content {
    flex: 1;
    min-width: 0;
    display: flex;
    flex-direction: column;
}

/* Viewports */
.views {
    flex: 1;
    display: grid;
    grid-template-columns: 1fr 1fr;
    grid-template-rows: 1fr 1fr;
    border-bottom: 3px solid #333;
}
.view {
    display: flex;
    flex-direction: column;
    min-width: 0;
    border-top: 2px solid #666;
    border-left: 2px solid #666;
    border-right: 2px solid #333;
}
.view header {
    display: flex;
    align-items: center;
    height: 44px;
    padding: 0 4px 0 15px;
}
.view.active header {
    background: #6a6a6a;
    padding: 0 4px 0 10px;
}
.view .grip, .panel .grip {
    margin-right: 16px;
}
.nav-icons {
    display: flex;
    gap: 4px;
    margin-left: auto;
}
.nav-icons svg {
    width: 29px;
    height: 30px;
}
.canvas {
    position: relative;
    flex: 1;
    background: #555;
}
.active .canvas {
    border: 2px solid #b0b0b0;
}
.canvas > svg {
    position: absolute;
    width: 100%;
    height: 100%;
}
.axes {
    font-size: 22px;
    text-anchor: middle;
}
.axes .x {
    fill: #d23c3c;
}
.axes .y {
    fill: #3cd23c;
}
.axes .z {
    fill: #3c3cd2;
}
.view-name, .spacing {
    position: absolute;
    padding: 3px 7px 3px 4px;
    border-radius: 5px;
    background: rgba(40, 40, 40, 0.3);
    color: #c4c4c4;
}
.view-name {
    top: 4px;
    left: 5px;
}
.spacing {
    right: 8px;
    bottom: 8px;
}
.active .view-name {
    top: 2px;
    left: 3px;
}
.active .spacing {
    right: 6px;
    bottom: 6px;
}

/* Fields */
.field {
    position: relative;
    display: block;
    height: 36px;
    border: 2px solid #555;
    border-top-color: #2b2b2b;
    border-left-color: #3a3a3a;
    border-radius: 4px;
    background: #333;
    color: #b4b4b4;
}
.field input {
    width: 100%;
    height: 100%;
    padding: 0 16px 0 6px;
}
.field::before, .field::after {
    content: "";
    position: absolute;
    right: 4px;
    top: 7px;
    border: 5px solid transparent;
    border-top-width: 0;
    border-bottom: 7px solid #8a8a8a;
}
.field::after {
    top: 17px;
    border-top: 7px solid #8a8a8a;
    border-bottom-width: 0;
}
.select {
    position: relative;
    display: block;
    height: 35px;
    border: 2px solid #333;
    border-radius: 6px;
    background: linear-gradient(#707070, #646464);
    color: #d0d0d0;
}
.select select {
    appearance: none;
    width: 100%;
    height: 100%;
    padding-left: 12px;
}
.select::after {
    content: "";
    position: absolute;
    right: 7px;
    top: 12px;
    border: 8px solid transparent;
    border-top-color: #d0d0d0;
    border-bottom-width: 0;
}

/* Timeline */
.timeline, .playback {
    display: flex;
    align-items: center;
    padding-right: 1px;
}
.timeline {
    height: 60px;
}
.frame-field {
    flex: none;
    width: 164px;
}
.timeline .grip-v, .playback .grip-v {
    height: 36px;
    margin-right: 5px;
}
.ruler {
    position: relative;
    flex: 1;
    height: 48px;
    margin-right: 10px;
    padding: 0 13px 0 11px;
    border: 2px solid #3c3c3c;
    border-top-color: #2b2b2b;
    border-radius: 4px;
    background: linear-gradient(#333 28px, #444 28px 30px, #333 30px);
    overflow: hidden;
}
.marker {
    position: absolute;
    left: 2px;
    top: 0;
    width: 18px;
    height: 29px;
    background: #57e08d;
}
.frames {
    display: flex;
    justify-content: space-between;
    height: 44px;
    border-right: 2px solid #666;
    background:
        linear-gradient(90deg, #666 2px, transparent 2px) 0 0 / calc(100% / 3) 36px repeat-x,
        linear-gradient(90deg, #b0b0b0 2px, transparent 2px) 0 36px / calc(100% / 18) 8px repeat-x,
        linear-gradient(90deg, #b0b0b0 2px, transparent 2px) 0 36px / calc(100% / 90) 5px repeat-x;
}
.frames span {
    display: flex;
    justify-content: center;
    width: 0;
}
.frames .now {
    justify-content: flex-start;
    text-indent: 11px;
    color: #57e08d;
}
.playback {
    height: 62px;
    gap: 22px;
    padding-bottom: 6px;
}
.playback .grip-v {
    margin-right: -17px;
}
.playback .range {
    flex: 1;
    display: flex;
    align-items: center;
    gap: 8px;
    height: 37px;
    margin: 0 -11px 0 -9px;
    padding: 0 12px;
    border: 2px solid #333;
    border-radius: 8px;
    background: linear-gradient(#808080, #5a5a5a);
    color: #333;
}
.range svg {
    width: 14px;
    height: 14px;
    fill: #d8d8d8;
}
.range .end {
    margin-left: auto;
}
.group.small button {
    width: 54px;
    height: 51px;
}

/* Panels */
.bottom {
    display: flex;
    gap: 6px;
    height: 253px;
    margin-bottom: 5px;
}
.panel {
    flex: 1;
    min-width: 0;
    display: flex;
    flex-direction: column;
    border: 2px solid #333;
    border-top-color: #666;
    border-left-color: #666;
}
.panel header {
    display: flex;
    align-items: center;
    height: 46px;
    padding: 0 4px 2px 11px;
    border-bottom: 2px solid #666;
    box-shadow: inset 0 -2px #333;
}
.bottom .coords {
    flex: none;
    width: 724px;
}
.coords header {
    height: 43px;
    padding-left: 8px;
}
.coords header b {
    flex: none;
    width: 226px;
    font-weight: 400;
}
.coords header b:last-child {
    flex: 1;
}
.coords header .grip {
    margin-right: 14px;
}
.coord-grid {
    display: grid;
    grid-template-columns: 232px 232px 230px;
    grid-auto-rows: 36px;
    gap: 6px;
    padding: 9px 6px;
}
.coord-grid label {
    display: grid;
    grid-template-columns: 24px 1fr;
    align-items: center;
}
.coord-grid .select, .apply {
    margin: 4px 0 0 24px;
}
.apply {
    height: 35px;
    border: 2px solid #333;
    border-radius: 17px;
    background: linear-gradient(#707070, #646464);
    color: #d0d0d0;
}
.status {
    display: flex;
    align-items: center;
    height: 40px;
    padding-left: 7px;
    border-top: 2px solid #666;
    border-bottom: 2px solid #333;
    border-radius: 0 0 0 10px;
}

/* Right side */
.right {
    flex: none;
    display: flex;
    flex-direction: column;
    gap: 8px;
    width: 1302px;
    padding: 7px 4px 0 4px;
}
.dock {
    display: flex;
    align-items: stretch;
}
.dock.objects {
    height: 1030px;
}
.dock.attributes {
    flex: 1;
}
.nav-icons.wide {
    gap: 8px;
}
.nav-icons.wide svg {
    width: 30px;
    height: 34px;
}
.nav-icons.wide .nav-history, .nav-icons.wide .spaced {
    margin-right: 13px;
}
.nav-icons.wide .nav-history {
    width: 72px;
}
.tree {
    flex: 1;
    display: flex;
}
.col {
    width: 79px;
    border-left: 2px solid #333;
}
.col.names {
    width: 139px;
    border: none;
}
.col.tags {
    flex: 1;
    border-left-color: #666;
    margin-right: 3px;
    border-right: 2px solid #666;
}
.row {
    display: flex;
    align-items: center;
    height: 41px;
    background: #505050;
}
.names .row, .flags .row {
    background: #585858;
}
.row svg {
    width: 78px;
    height: 40px;
}
.names .row {
    color: #ffc12e;
}
.row .obj-icon {
    width: 36px;
    height: 34px;
    margin-right: 4px;
}
.branch {
    width: 16px;
    height: 22px;
    margin: 0 0 19px 16px;
    border: solid #999;
    border-width: 0 0 2px 2px;
}
.tabs {
    display: flex;
    flex-direction: column;
    gap: 3px;
    width: 39px;
}
.tabs button {
    width: 39px;
    padding: 10px 0 12px;
    border-radius: 0 6px 6px 0;
    background: #333;
    color: #6a6a6a;
    text-align: left;
    writing-mode: vertical-rl;
}
.tabs .current {
    background: linear-gradient(90deg, #5e5e5e, #6e6e6e);
    color: #ffa51c;
}

/* Attributes */
.props {
    padding: 4px 8px 0 4px;
}
.props h2, .props h3 {
    margin: 0;
    font-size: 22px;
    font-weight: 400;
}
.props h2 {
    display: flex;
    align-items: center;
    gap: 8px;
    height: 46px;
}
.props h2 svg {
    width: 44px;
    height: 42px;
}
.segmented {
    display: inline-flex;
    gap: 2px;
    margin: 1px 0 10px 2px;
    border: 2px solid #2c2c2c;
    border-left-width: 0;
    border-radius: 5px;
    background: #2c2c2c;
    overflow: hidden;
}
.segmented button {
    width: 86px;
    height: 33px;
    padding-right: 5px;
    background: #6a6a6a;
    color: #d0d0d0;
}
.segmented .on {
    background: #8ba5cd;
    color: #000;
}
.props h3 {
    padding: 3px 5px;
    background: #333;
    font-weight: 700;
}
.prop-grid, .prop-list {
    display: grid;
    align-items: center;
    padding-left: 4px;
}
.prop-grid {
    grid-template-columns: 36px 91px 173px 36px 139px 163px;
    row-gap: 6px;
    margin-top: 9px;
}
.prop-grid .field {
    width: 163px;
}
.prop-list {
    grid-template-columns: 36px 204px 164px;
    grid-auto-rows: 38px;
    margin-top: 17px;
}
.prop-list.disabled {
    grid-auto-rows: 36px;
    row-gap: 6px;
    margin-top: 3px;
    color: #767676;
}
.disabled .field {
    background: #404040;
    border-color: #4e4e4e;
    border-top-color: #3a3a3a;
    color: #767676;
}
.disabled .field::before, .disabled .field::after {
    opacity: 0.5;
}
.key {
    width: 28px;
    height: 28px;
    border: 5px solid #747474;
    border-radius: 50%;
    background: #808080;
    box-shadow: inset 0 0 0 2px #1c1c1c;
}
.disabled .key {
    width: 18px;
    height: 18px;
    margin-left: 5px;
    border: 2px solid #3a3a3a;
    border-right-color: #6a6a6a;
    background: none;
    box-shadow: none;
}
.dots {
    display: flex;
    margin-right: 13px;
}
.dots::after {
    content: "";
    flex: 1;
    height: 3px;
    margin: 17px 0 0 3px;
    background: linear-gradient(90deg, transparent 9px, #999 9px) right / 12px 3px;
}
input[type="checkbox"] {
    appearance: none;
    width: 24px;
    height: 25px;
    border: 1px solid #3a3a3a;
    border-radius: 5px;
    background: linear-gradient(135deg, #808080, #626262);
}
```
